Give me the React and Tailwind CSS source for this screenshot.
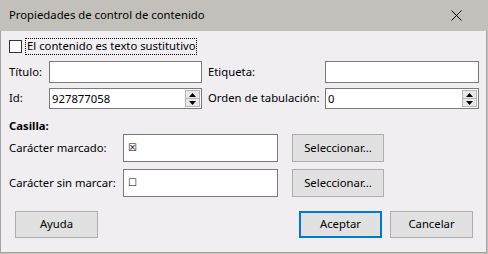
import { useState } from "react";

const Spinner = () => (
    <div className="flex flex-col w-[15px] h-full shrink-0">
        <div className="flex-1 flex items-center justify-center bg-[#e8e8e8] border border-[#b5b5b5]">
            <svg width="7" height="4" viewBox="0 0 7 4"><path d="M0 4 L3.5 0 L7 4 Z" fill="#000" /></svg>
        </div>
        <div className="flex-1 flex items-center justify-center bg-[#e8e8e8] border border-t-0 border-[#b5b5b5]">
            <svg width="7" height="4" viewBox="0 0 7 4"><path d="M0 0 L7 0 L3.5 4 Z" fill="#000" /></svg>
        </div>
    </div>
);

const TextBox = ({ value, spin, className }) => (
    <div className={`flex items-stretch bg-white border border-[#7a7a7a] ${className}`}>
        <span className="flex-1 flex items-center pl-[2px] text-[11.3px] text-black leading-none">{value}</span>
        {spin && <div className="py-[1px] pr-[1px]"><Spinner /></div>}
    </div>
);

const Button = ({ children, primary, className }) => (
    <button className={`flex items-center justify-center whitespace-nowrap text-[11.3px] text-black bg-[#e1e1e1] ${primary ? 'border-2 border-[#0078d7]' : 'border border-[#adadad]'} ${className}`}>
        {children}
    </button>
);

const App = () => {
    const [placeholder, setPlaceholder] = useState(false);

    return (
        <div className="w-[488px] h-[254px] bg-[#c3c0bb] flex flex-col text-black whitespace-nowrap" style={{ fontFamily: '"Noto Sans", "DejaVu Sans", sans-serif' }}>
            <div className="h-[31px] flex items-center justify-between pl-[9px] pr-[26px] shrink-0">
                <span className="text-[11.3px]">Propiedades de control de contenido</span>
                <svg width="11" height="11" viewBox="0 0 11 11"><path d="M0.5 0.5 L10.5 10.5 M10.5 0.5 L0.5 10.5" stroke="#000" strokeWidth="1" /></svg>
            </div>
            <div className="w-[487px] h-[222px] bg-[#f0eef1] border-x border-b border-[#a3a3a3] flex flex-col pl-[8px]">
                <div className="mt-[7px] h-[17px] flex items-center">
                    <div onClick={() => setPlaceholder(!placeholder)} className="w-[13px] h-[13px] bg-white border border-[#333] shrink-0" />
                    <span className="ml-[3px] h-[17px] w-[172px] flex items-center pl-[1px] border border-dotted border-black text-[11.3px]">El contenido es texto sustitutivo</span>
                </div>

                <div className="mt-[6px] h-[22px] flex items-center">
                    <span className="w-[40px] text-[11.3px]">Título:</span>
                    <TextBox className="w-[153px] h-[22px]" value="" />
                    <span className="ml-[6px] w-[117px] text-[11.3px]">Etiqueta:</span>
                    <TextBox className="w-[154px] h-[22px]" value="" />
                </div>

                <div className="mt-[5px] h-[21px] flex items-center">
                    <span className="w-[40px] text-[11.3px]">Id:</span>
                    <TextBox className="w-[153px] h-[21px]" value="927877058" spin />
                    <span className="ml-[6px] w-[117px] text-[11.3px]">Orden de tabulación:</span>
                    <TextBox className="w-[154px] h-[21px]" value="0" spin />
                </div>

                <div className="mt-[9px] h-[16px] flex items-center">
                    <span className="text-[11.3px] font-bold">Casilla:</span>
                </div>

                <div className="h-[28px] flex items-center">
                    <span className="w-[114px] text-[11.3px]">Carácter marcado:</span>
                    <div className="w-[155px] h-[28px] bg-white border border-[#7a7a7a] flex items-center pl-[4px]">
                        <span className="text-[10px] leading-none" style={{ fontFamily: '"DejaVu Sans", sans-serif' }}>☒</span>
                    </div>
                    <Button className="ml-[14px] w-[92px] h-[28px]">Seleccionar...</Button>
                </div>

                <div className="mt-[7px] h-[28px] flex items-center">
                    <span className="w-[114px] text-[11.3px]">Carácter sin marcar:</span>
                    <div className="w-[155px] h-[28px] bg-white border border-[#7a7a7a] flex items-center pl-[4px]">
                        <span className="text-[10px] leading-none" style={{ fontFamily: '"DejaVu Sans", sans-serif' }}>☐</span>
                    </div>
                    <Button className="ml-[14px] w-[92px] h-[28px]">Seleccionar...</Button>
                </div>

                <div className="mt-[14px] h-[27px] flex items-center pl-[6px]">
                    <Button className="w-[83px] h-[27px]">Ayuda</Button>
                    <div className="flex-1" />
                    <Button primary className="w-[83px] h-[27px]">Aceptar</Button>
                    <Button className="ml-[8px] w-[83px] h-[27px] mr-[13px]">Cancelar</Button>
                </div>
            </div>
        </div>
    );
};

export default App;
